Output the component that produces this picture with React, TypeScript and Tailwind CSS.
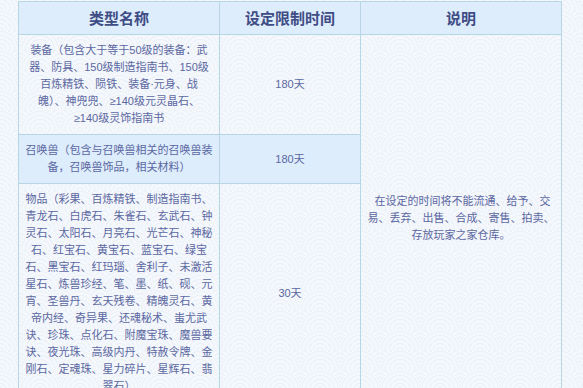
import React from 'react';

// 表格数据：每行文字按截图手动断行
const rows = [
  {
    name: [
      '装备（包含大于等于50级的装备：武',
      '器、防具、150级制造指南书、150级',
      '百炼精铁、陨铁、装备·元身、战',
      '魄）、神兜兜、≥140级元灵晶石、',
      '≥140级灵饰指南书',
    ],
    time: '180天',
    highlight: false,
  },
  {
    name: ['召唤兽（包含与召唤兽相关的召唤兽装', '备，召唤兽饰品，相关材料）'],
    time: '180天',
    highlight: true,
  },
  {
    name: [
      '物品（彩果、百炼精铁、制造指南书、',
      '青龙石、白虎石、朱雀石、玄武石、钟',
      '灵石、太阳石、月亮石、光芒石、神秘',
      '石、红宝石、黄宝石、蓝宝石、绿宝',
      '石、黑宝石、红玛瑙、舍利子、未激活',
      '星石、炼兽珍经、笔、墨、纸、砚、元',
      '宵、圣兽丹、玄天残卷、精魄灵石、黄',
      '帝内经、奇异果、还魂秘术、蚩尤武',
      '诀、珍珠、点化石、附魔宝珠、魔兽要',
      '诀、夜光珠、高级内丹、特赦令牌、金',
      '刚石、定魂珠、星力碎片、星辉石、翡',
      '翠石）',
    ],
    time: '30天',
    highlight: false,
  },
];

const note = ['\u00a0在设定的时间将不能流通、给予、交', '易、丢弃、出售、合成、寄售、拍卖、', '存放玩家之家仓库。'];

function Lines({ lines }: { lines: string[] }) {
  return (
    <>
      {lines.map((l, i) => (
        <div key={i} className="whitespace-nowrap">
          {l}
        </div>
      ))}
    </>
  );
}

export default function App() {
  return (
    <div
      className="w-[583px] h-[388px] overflow-hidden pt-px pl-[18px] font-['Liberation_Sans','Noto_Sans_CJK_SC',sans-serif] bg-[#f4f7fb] bg-[radial-gradient(circle_at_50%_100%,#f4f7fb_0_2px,#ecf0f7_2px_3px,#f4f7fb_3px_6px,#ecf0f7_6px_7px,#f4f7fb_7px_10px,#ecf0f7_10px_11px,#f4f7fb_11px_14px,#ecf0f7_14px_15px,#f4f7fb_15px_18px,#ecf0f7_18px_19px,#f4f7fb_19px_20px,transparent_20px),radial-gradient(circle_at_50%_100%,#f4f7fb_0_2px,#ecf0f7_2px_3px,#f4f7fb_3px_6px,#ecf0f7_6px_7px,#f4f7fb_7px_10px,#ecf0f7_10px_11px,#f4f7fb_11px_14px,#ecf0f7_14px_15px,#f4f7fb_15px_18px,#ecf0f7_18px_19px,#f4f7fb_19px_20px,transparent_20px)] bg-[length:40px_20px] bg-[position:20px_10px,0_0]"
    >
      <table className="border-collapse table-fixed w-[543px] text-[11px] leading-[17px] text-[#5b68a2]">
        <colgroup>
          <col className="w-[201px]" />
          <col className="w-[141px]" />
          <col className="w-[201px]" />
        </colgroup>
        <thead>
          <tr className="bg-[#ddedfc] text-[15px] text-[#3f4c85] h-[33px]">
            <th className="border border-[#b8d7e6] font-bold">类型名称</th>
            <th className="border border-[#b8d7e6] font-bold">设定限制时间</th>
            <th className="border border-[#b8d7e6] font-bold">说明</th>
          </tr>
        </thead>
        <tbody>
          {rows.map((r, i) => (
            <tr key={i} className={r.highlight ? 'bg-[#ddedfc]' : ''}>
              <td className="border border-[#b8d7e6] px-1 py-[7px] text-center align-middle">
                <Lines lines={r.name} />
              </td>
              <td className="border border-[#b8d7e6] text-center align-middle">{r.time}</td>
              {i === 0 && (
                <td rowSpan={3} className="border border-[#b8d7e6] text-center align-middle">
                  <Lines lines={note} />
                </td>
              )}
            </tr>
          ))}
        </tbody>
      </table>
    </div>
  );
}
